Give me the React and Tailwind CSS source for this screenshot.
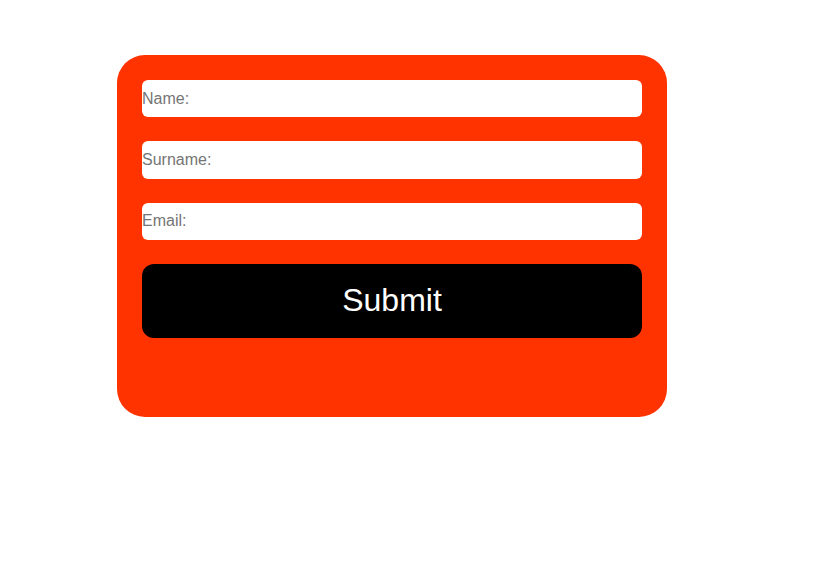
import React from 'react'

export default function App() {
  return (
    <div className="min-h-screen bg-white pt-[55px] pl-[117px]" style={{ fontFamily: '"Liberation Sans", Arial, sans-serif' }}>
      {/* Form card */}
      <form
        className="w-[550px] h-[362px] bg-[#ff3300] rounded-[28px] px-[25px] pt-[25px] flex flex-col gap-[24px]"
        onSubmit={(e) => e.preventDefault()}
      >
        <input
          type="text"
          placeholder="Name:"
          className="w-[500px] h-[37px] bg-white rounded-[6px] text-[16px] text-black placeholder:text-[#757575] outline-none"
        />
        <input
          type="text"
          placeholder="Surname:"
          className="w-[500px] h-[37.5px] bg-white rounded-[6px] text-[16px] text-black placeholder:text-[#757575] outline-none"
        />
        <input
          type="email"
          placeholder="Email:"
          className="w-[500px] h-[37.5px] bg-white rounded-[6px] text-[16px] text-black placeholder:text-[#757575] outline-none"
        />
        <button
          type="submit"
          className="w-[500px] h-[74px] bg-black text-white rounded-[12px] text-[32px] leading-none pb-[2px]"
        >
          Submit
        </button>
      </form>
    </div>
  )
}
